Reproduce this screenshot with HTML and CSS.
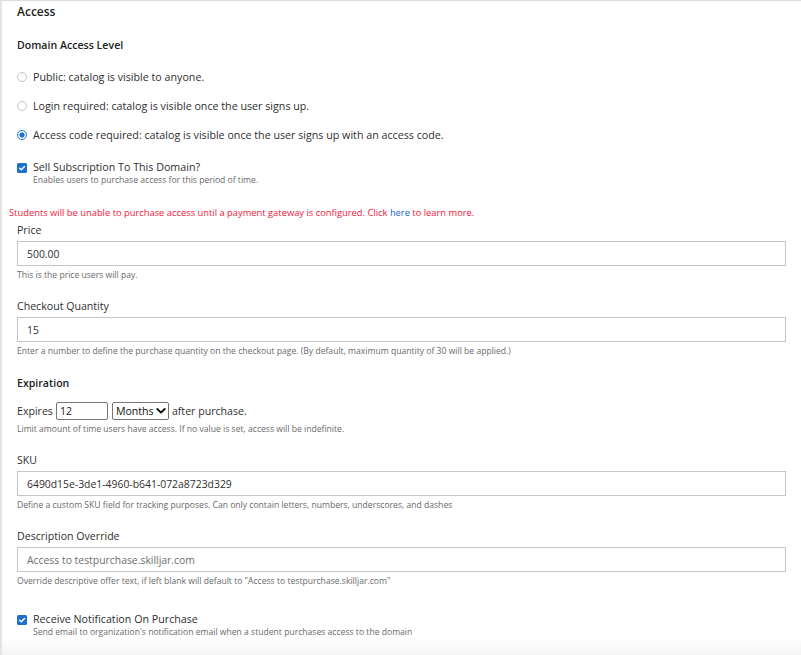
FILE: index.html
```html
<!DOCTYPE html>
<html lang="en">
<head>
<meta charset="utf-8">
<title>Access</title>
<link rel="stylesheet" href="styles.css">
</head>
<body>
<div class="panel">
  <h2 class="title">Access</h2>
  <h3 class="subhead">Domain Access Level</h3>
  <div class="radios">
    <label class="radio-row"><input type="radio" name="lvl" class="radio"> Public: catalog is visible to anyone.</label>
    <label class="radio-row"><input type="radio" name="lvl" class="radio"> Login required: catalog is visible once the user signs up.</label>
    <label class="radio-row"><input type="radio" name="lvl" class="radio" checked> Access code required: catalog is visible once the user signs up with an access code.</label>
  </div>

  <div class="check-row sell">
    <span class="check"><svg viewBox="0 0 10 10" width="10" height="10"><path d="M2.6 5.2 L4.3 6.8 L7.5 3.4" fill="none" stroke="#fff" stroke-width="1.4" stroke-linecap="round" stroke-linejoin="round"/></svg></span>
    <div class="check-text">
      <div class="check-label">Sell Subscription To This Domain?</div>
      <div class="help">Enables users to purchase access for this period of time.</div>
    </div>
  </div>

  <p class="warning">Students will be unable to purchase access until a payment gateway is configured. Click <a class="link" href="#">here</a> to learn more.</p>

  <div class="field first">
    <div class="label">Price</div>
    <input class="text-input" type="text" value="500.00">
    <div class="help">This is the price users will pay.</div>
  </div>

  <div class="field">
    <div class="label">Checkout Quantity</div>
    <input class="text-input" type="text" value="15">
    <div class="help">Enter a number to define the purchase quantity on the checkout page. (By default, maximum quantity of 30 will be applied.)</div>
  </div>

  <h3 class="subhead exp">Expiration</h3>
  <div class="expires-row">
    <span>Expires</span>
    <input class="small-input" type="text" value="12">
    <span class="select-wrap"><span class="select-text">Months</span><svg class="chev" viewBox="0 0 10 8" width="10" height="8"><path d="M1.3 2 L5 5.6 L8.7 2" fill="none" stroke="#111" stroke-width="1.9" stroke-linecap="round" stroke-linejoin="round"/></svg></span>
    <span>after purchase.</span>
  </div>
  <div class="help exp-help">Limit amount of time users have access. If no value is set, access will be indefinite.</div>

  <div class="field sku">
    <div class="label">SKU</div>
    <input class="text-input" type="text" value="6490d15e-3de1-4960-b641-072a8723d329">
    <div class="help">Define a custom SKU field for tracking purposes. Can only contain letters, numbers, underscores, and dashes</div>
  </div>

  <div class="field">
    <div class="label">Description Override</div>
    <input class="text-input" type="text" placeholder="Access to testpurchase.skilljar.com">
    <div class="help">Override descriptive offer text, if left blank will default to "Access to testpurchase.skilljar.com"</div>
  </div>

  <div class="check-row notify">
    <span class="check"><svg viewBox="0 0 10 10" width="10" height="10"><path d="M2.6 5.2 L4.3 6.8 L7.5 3.4" fill="none" stroke="#fff" stroke-width="1.4" stroke-linecap="round" stroke-linejoin="round"/></svg></span>
    <div class="check-text">
      <div class="check-label">Receive Notification On Purchase</div>
      <div class="help">Send email to organization's notification email when a student purchases access to the domain</div>
    </div>
  </div>
</div>
</body>
</html>
```

FILE: styles.css
```css
* { box-sizing: border-box; }
html, body { margin: 0; padding: 0; }
body {
  font-family: "Open Sans", "Noto Sans", sans-serif;
  color: #2f2f2f;
  background: #fff;
}
.panel {
  min-height: 655px;
  border-top: 1px solid #dcdcdc;
  border-left: 2px solid #e4e4e4;
  padding: 1px 15px 0 15px;
  background: linear-gradient(to bottom, #fff 0, #fff calc(100% - 18px), #f4f4f4 100%);
}
.title {
  margin: 0;
  font-size: 12px;
  font-weight: 600;
  line-height: 20px;
  color: #222;
}
.subhead {
  margin: 15px 0 0;
  font-size: 10.6px;
  font-weight: 600;
  line-height: 16px;
  color: #222;
}
.radios {
  display: flex;
  flex-direction: column;
  gap: 13px;
  margin-top: 16px;
}
.radio-row {
  display: flex;
  align-items: center;
  gap: 6px;
  font-size: 10.7px;
  line-height: 16px;
}
.radio {
  appearance: none;
  -webkit-appearance: none;
  margin: 0;
  width: 10px;
  height: 10px;
  border: 1px solid #c4c4c4;
  border-radius: 50%;
  background: #fff;
  flex: none;
}
.radio:checked {
  border-color: #1a6fd8;
  background: radial-gradient(circle, #1a6fd8 0, #1a6fd8 2.3px, #fff 2.9px);
}
.check-row {
  display: flex;
  align-items: flex-start;
  gap: 6px;
}
.sell { margin-top: 16px; }
.check {
  flex: none;
  width: 10px;
  height: 10px;
  margin-top: 4px;
  background: #1f6fcf;
  border-radius: 1.5px;
  display: flex;
}
.check-label {
  font-size: 10.7px;
  line-height: 16px;
}
.help {
  font-size: 8.6px;
  line-height: 12px;
  color: #6a6a6a;
}
.check-text .help { margin-top: -1px; }
.warning {
  margin: 20px 0 0 -8px;
  font-size: 9.35px;
  line-height: 14px;
  color: #f0173d;
}
.link { color: #1769d2; text-decoration: none; }
.field { margin-top: 17px; }
.field.first { margin-top: 2px; }
.label {
  font-size: 10.6px;
  line-height: 16px;
  margin-bottom: 3px;
}
.text-input {
  display: block;
  width: 100%;
  height: 25px;
  margin: 0;
  padding: 0 9px;
  border: 1px solid #c2c6cc;
  border-radius: 0;
  font-family: inherit;
  font-size: 10.4px;
  color: #2f2f2f;
  background: #fff;
  outline: none;
}
.text-input::placeholder { color: #6e6e6e; }
.field .help { margin-top: 3px; }
.subhead.exp { margin-top: 18px; }
.expires-row {
  display: flex;
  align-items: center;
  gap: 3px;
  margin-top: 11px;
  height: 18px;
  font-size: 10.6px;
}
.small-input {
  width: 52px;
  height: 18px;
  margin: 0 1px 0 0;
  padding: 0 3px;
  border: 1px solid #767676;
  border-radius: 2px;
  font-family: inherit;
  font-size: 10.6px;
  color: #222;
  background: #fff;
  outline: none;
}
.select-wrap {
  display: inline-flex;
  align-items: center;
  gap: 2px;
  width: 57px;
  height: 18px;
  padding: 0 2px 0 3px;
  border: 1px solid #767676;
  border-radius: 2px;
  color: #111;
}
.chev { flex: none; }
.exp-help { margin-top: 3px; }
.field.sku { margin-top: 17px; }
.notify { margin-top: 24px; }
```
